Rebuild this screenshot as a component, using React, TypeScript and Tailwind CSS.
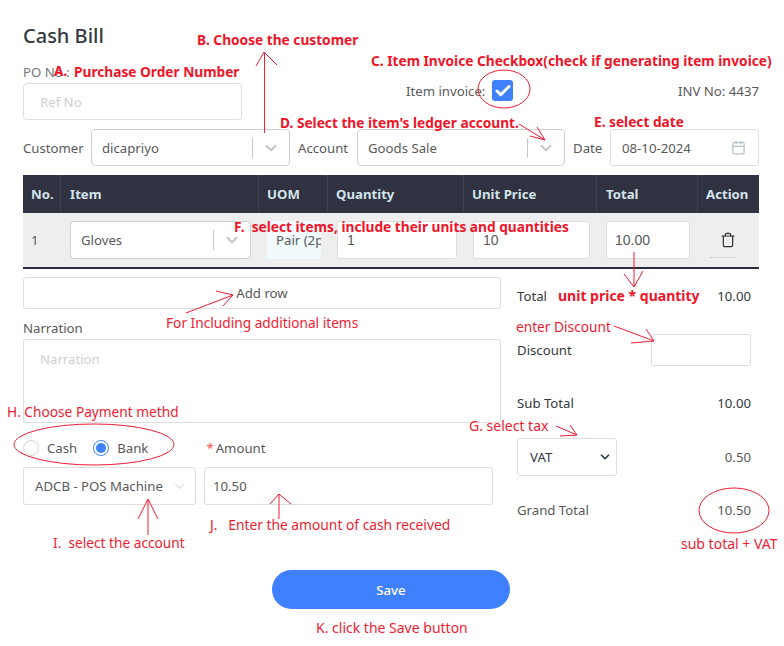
import { Calendar, Check, ChevronDown, Trash } from "lucide-react";

const COLUMNS = [
  { label: "No.", cls: "w-[38px] pl-2" },
  { label: "Item", cls: "w-[198px] pl-[9px]" },
  { label: "UOM", cls: "w-[69px] pl-2" },
  { label: "Quantity", cls: "w-[136px] pl-2" },
  { label: "Unit Price", cls: "w-[133px] pl-2" },
  { label: "Total", cls: "w-[101px] pl-[9px]" },
  { label: "Action", cls: "w-[61px] pl-2 border-r-0" },
];

// annotation arrows, as polylines over the form
const ARROWS = [
  "264.5,133 264.5,52",
  "256,66 264,52 277,65",
  "519,124 545,140",
  "537,127 545,140 530,136",
  "634,252 634,287",
  "624,274 634,287 643,271",
  "186,313 233,295",
  "216,291 233,295 223,306",
  "614,326 654,341",
  "646,329 654,341 631,343",
  "556,426 577,435",
  "570,425 577,435 560,436",
  "148,499 148,535",
  "138,519 148,499 158,519",
  "279,494 279,519",
  "270,504 279,494 291,504",
];

function SelectBox({ value, className }: { value: string; className: string }) {
  return (
    <div className={`flex items-center rounded border border-[#cfcfcf] bg-white pl-[10px] ${className}`}>
      <span className="flex-1 truncate">{value}</span>
      <span className="h-5 w-px bg-[#c8c8c8]" />
      <span className="flex w-[36px] justify-center text-[#c4c4c4]">
        <ChevronDown size={18} strokeWidth={2.5} />
      </span>
    </div>
  );
}

function Field({ value, className }: { value?: string; className: string }) {
  return (
    <div className={`flex items-center rounded-[3px] border border-[#dedede] bg-white ${className}`}>
      {value}
    </div>
  );
}

function Note({
  className,
  size = "text-[13.7px]",
  children,
}: {
  className: string;
  size?: string;
  children: string;
}) {
  return (
    <span className={`absolute whitespace-pre leading-5 text-[#ef1c32] ${size} ${className}`}>
      {children}
    </span>
  );
}

function BoldNote({
  className,
  size = "text-[13.7px]",
  children,
}: {
  className: string;
  size?: string;
  children: string;
}) {
  return (
    <span className={`absolute whitespace-pre font-bold leading-5 text-[#f01428] ${size} ${className}`}>
      {children}
    </span>
  );
}

export default function App() {
  return (
    <div className="relative h-[646px] w-[784px] overflow-hidden bg-white pl-[23px] pr-[25px] pt-[22px] font-['Noto_Sans',sans-serif] text-[13.2px] leading-5 text-[#595959]">
      <h1 className="text-[20px] font-medium leading-7 text-[#333a40]">Cash Bill</h1>

      <div className="mt-[12px] flex items-end">
        <div className="w-[219px]">
          <div className="text-[#777]">PO No :</div>
          <div className="mt-px flex h-[37px] items-center rounded border border-[#dedede] pl-4 text-[#cfcfcf]">
            Ref No
          </div>
        </div>
        <div className="mb-[19px] ml-[164px] flex items-center">
          <span>Item invoice:</span>
          <span className="ml-[7px] flex h-[21px] w-[21px] items-center justify-center rounded-[3px] bg-[#3f80ff] text-white">
            <Check size={18} strokeWidth={4} />
          </span>
        </div>
        <div className="mb-[19px] ml-auto">INV No: 4437</div>
      </div>

      <div className="mt-[9px] flex h-[37px] items-center">
        <span className="w-[68px]">Customer</span>
        <SelectBox value="dicapriyo" className="h-full w-[199px]" />
        <span className="ml-2 w-[59px]">Account</span>
        <SelectBox value="Goods Sale" className="h-full w-[208px]" />
        <span className="ml-2 w-[37px]">Date</span>
        <div className="flex h-full w-[149px] items-center rounded-[3px] border border-[#dedede] pl-[11px] pr-[12px]">
          <span className="flex-1">08-10-2024</span>
          <Calendar size={15} className="text-[#b9c2c8]" />
        </div>
      </div>

      <div className="mt-[9px] flex h-[38px] bg-[#303241] font-bold leading-[38px] text-[#d3e3ea]">
        {COLUMNS.map((col) => (
          <div key={col.label} className={`border-r border-dotted border-[#4b4d5c] ${col.cls}`}>
            {col.label}
          </div>
        ))}
      </div>
      <div className="flex h-[56px] items-center border-b-2 border-[#2c2e3d] bg-[#eeeeee]">
        <span className="w-[47px] pl-2">1</span>
        <SelectBox value="Gloves" className="h-[38px] w-[181px]" />
        <div className="ml-4 flex h-[38px] w-[54px] items-center overflow-hidden rounded-[3px] bg-[#f1fafd] pl-[9px] whitespace-nowrap">
          Pair (2p
        </div>
        <Field value="1" className="ml-4 h-[38px] w-[120px] pl-[9px] font-['Liberation_Sans',sans-serif] text-[14px]" />
        <Field value="10" className="ml-4 h-[38px] w-[117px] pl-[9px] font-['Liberation_Sans',sans-serif] text-[14px]" />
        <Field value="10.00" className="ml-4 h-[38px] w-[84px] pl-2 font-['Liberation_Sans',sans-serif] text-[14px]" />
        <div className="ml-[20px] flex h-[36px] w-[26px] items-center justify-end border-b border-dotted border-[#c9c9c9] text-[#333]">
          <Trash size={16} strokeWidth={1.8} />
        </div>
      </div>

      <div className="mt-2 flex">
        <div className="w-[478px]">
          <Field className="h-[32px] w-full justify-center" value="Add row" />
          <div className="mt-[9px]">Narration</div>
          <div className="mt-px h-[84px] rounded-[3px] border border-[#dedede] pl-4 pt-[9px] text-[#cfcfcf]">
            Narration
          </div>
          <div className="mt-[15px] flex items-center">
            <span className="h-4 w-4 rounded-full border border-[#d9d9d9]" />
            <span className="ml-2">Cash</span>
            <span className="ml-[16px] flex h-4 w-4 items-center justify-center rounded-full border border-[#3f80ff]">
              <span className="h-[10px] w-[10px] rounded-full bg-[#3f80ff]" />
            </span>
            <span className="ml-2">Bank</span>
            <span className="ml-[58px] text-[#ff4d4f]">*</span>
            <span className="ml-[2px]">Amount</span>
          </div>
          <div className="mt-[9px] flex gap-2">
            <div className="flex h-[38px] w-[173px] items-center rounded-[3px] border border-[#dedede] pl-[11px] pr-[8px]">
              <span className="flex-1 whitespace-nowrap">ADCB - POS Machine</span>
              <ChevronDown size={15} strokeWidth={1} className="text-[#aaa]" />
            </div>
            <Field value="10.50" className="h-[38px] w-[289px] pl-2" />
          </div>
        </div>

        <div className="ml-4 w-[234px]">
          <div className="mt-[9px] flex justify-between text-[#333a40]">
            <span>Total</span>
            <span>10.00</span>
          </div>
          <div className="mt-[28px] flex h-[32px] items-center justify-between text-[#333a40]">
            <span>Discount</span>
            <span className="h-full w-[100px] rounded-[2px] border border-[#dedede]" />
          </div>
          <div className="mt-[27px] flex justify-between text-[#333a40]">
            <span>Sub Total</span>
            <span>10.00</span>
          </div>
          <div className="mt-[25px] flex h-[38px] items-center justify-between">
            <div className="flex h-full w-[100px] items-center rounded-[3px] border border-[#dedede] pl-3 pr-[4px] text-[#333a40]">
              <span className="flex-1">VAT</span>
              <ChevronDown size={14} strokeWidth={3} />
            </div>
            <span>0.50</span>
          </div>
          <div className="mt-6 flex justify-between">
            <span>Grand Total</span>
            <span>10.50</span>
          </div>
        </div>
      </div>

      <div className="mt-[50px] flex justify-center">
        <button className="h-[39px] w-[238px] rounded-full bg-[#3f80ff] font-medium text-white">Save</button>
      </div>

      {/* red markup drawn on top of the form */}
      <svg className="pointer-events-none absolute left-0 top-0" width="784" height="646" fill="none" stroke="#ef1c32">
        {ARROWS.map((points) => (
          <polyline key={points} points={points} />
        ))}
        <ellipse cx="504" cy="89" rx="26" ry="19" />
        <ellipse cx="94" cy="444.5" rx="80" ry="20.5" />
        <ellipse cx="734" cy="510.5" rx="35" ry="22.5" />
      </svg>

      <BoldNote className="left-[54px] top-[61px]">A.</BoldNote>
      <BoldNote className="left-[74px] top-[62px]">Purchase Order Number</BoldNote>
      <BoldNote className="left-[197px] top-[30px]">B. Choose the customer</BoldNote>
      <BoldNote className="left-[371px] top-[51px]">C. Item Invoice Checkbox(check if generating item invoice)</BoldNote>
      <BoldNote className="left-[280px] top-[113px]">D. Select the item's ledger account.</BoldNote>
      <BoldNote className="left-[594px] top-[112px]">E. select date</BoldNote>
      <BoldNote className="left-[234px] top-[217px]">F.  select items, include their units and quantities</BoldNote>
      <BoldNote className="left-[558px] top-[286px]" size="text-[14px]">unit price * quantity</BoldNote>
      <Note className="left-[166px] top-[313px]">For Including additional items</Note>
      <Note className="left-[516px] top-[317px]">enter Discount</Note>
      <Note className="left-[7px] top-[402px]">H. Choose Payment methd</Note>
      <Note className="left-[469px] top-[416px]" size="text-[14px]">G. select tax</Note>
      <Note className="left-[210px] top-[515px]" size="text-[13.8px]">J.   Enter the amount of cash received</Note>
      <Note className="left-[53px] top-[533px]">I.  select the account</Note>
      <Note className="left-[681px] top-[534px]" size="text-[14px]">sub total + VAT</Note>
      <Note className="left-[316px] top-[618px]" size="text-[14px]">K. click the Save button</Note>
    </div>
  );
}
